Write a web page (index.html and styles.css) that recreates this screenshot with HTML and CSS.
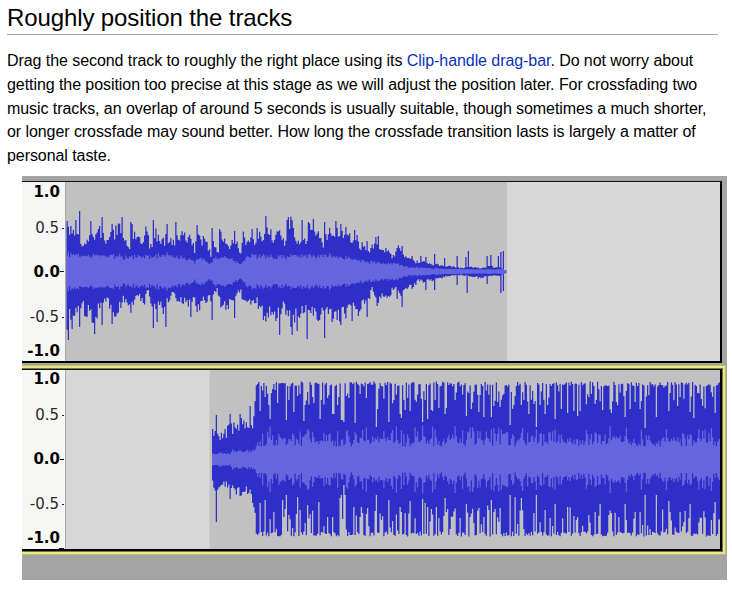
FILE: index.html
```html
<!DOCTYPE html>
<html lang="en">
<head>
<meta charset="utf-8">
<title>Roughly position the tracks</title>
<link rel="stylesheet" href="styles.css">
</head>
<body>
<main>
<h2>Roughly position the tracks</h2>
<p>Drag the second track to roughly the right place using its <a href="#">Clip-handle drag-bar</a>. Do not worry about<br>getting the position too precise at this stage as we will adjust the position later. For crossfading two<br>music tracks, an overlap of around 5 seconds is usually suitable, though sometimes a much shorter,<br>or longer crossfade may sound better. How long the crossfade transition lasts is largely a matter of<br>personal taste.</p>
<div class="editor">
  <section class="track first">
    <div class="ruler"><b>1.0</b><span class="half">0.5</span><b class="zero">0.0</b><span class="half">-0.5</span><b>-1.0</b></div>
    <svg class="wave" id="wave1" viewBox="66 182 654 179"><rect class="clip" x="66" y="182" width="441" height="179"/></svg>
  </section>
  <section class="track second">
    <div class="ruler"><b>1.0</b><span class="half">0.5</span><b class="zero">0.0</b><span class="half">-0.5</span><b>-1.0</b></div>
    <svg class="wave" id="wave2" viewBox="66 370 654 179"><rect class="clip" x="209.5" y="370" width="511" height="179"/></svg>
  </section>
</div>
</main>
<script src="wave.js"></script>
</body>
</html>
```
FILE: styles.css
```css
body { margin: 0; background: #fff; color: #000; font-family: "Liberation Sans", Arial, sans-serif; }
main { width: 732px; height: 591px; overflow: hidden; }
h2 { margin: 0 14px 0 7px; height: 34px; border-bottom: 1px solid #aaa; font-size: 24px; font-weight: 400; line-height: 36px; letter-spacing: -0.11px; }
p { margin: 14px 0 0 7px; font-size: 16px; line-height: 23.8px; height: 127px; white-space: nowrap; letter-spacing: -0.068px; }
a { color: #0b32b8; text-decoration: none; }
.editor { box-sizing: border-box; margin-left: 22px; width: 705px; height: 404px; padding-top: 5px; background: #a4a4a4; overflow: hidden; }
.track { display: flex; box-sizing: border-box; width: 700px; border-top: 1px solid #111; border-right: 2px solid #000; border-bottom: 2px solid #000; background: #d7d7d7; }
.first { height: 182px; }
.second { height: 182px; margin-top: 6px; box-shadow: 0 0 0 1px #77763f, 0 0 0 3px #ebe780, 0 0 0 4px #bcb97b; }
.ruler { box-sizing: border-box; width: 44px; height: 179px; display: grid; grid-template-rows: 19px 54px 33px 58px 10px; align-items: center; background: #f6f6f5; border-right: 1px solid #aaa; font: 15px "DejaVu Sans", sans-serif; color: #050505; }
.second .ruler { grid-template-rows: 18px 54px 34px 56px 12px; background: linear-gradient(#111, #111) 37px 100% / 5px 1px no-repeat #f6f6f5; }
.ruler b, .ruler span { display: flex; align-items: center; justify-content: flex-end; line-height: 10px; padding-right: 5px; }
.ruler .half, .ruler .zero { padding-right: 1px; }
.ruler .half { color: #2a2a2a; }
.half::after { content: ""; width: 2px; height: 1px; margin-left: 3px; background: #222; }
.zero::after { content: ""; width: 4px; height: 1px; background: #111; }
.wave { display: block; width: 654px; height: 179px; }
.clip { fill: #c1c1c1; }
.peak { fill: #2e2ec9; }
.rms { fill: #6565dd; }
```
FILE: wave.js
```js
const STEP = 1.25;
const parse = text => text.trim().split(/\s+/).map(pair => pair.split(":").map(Number));

// Repeatable jitter so that every load draws the same waveform.
function generator(seed) {
  return () => {
    seed = (seed * 1664525 + 1013904223) % 4294967296;
    return seed / 4294967296;
  };
}

function level(points, x) {
  let i = 1;
  while (i < points.length - 1 && points[i][0] < x) i++;
  const [x0, y0] = points[i - 1], [x1, y1] = points[i];
  const t = Math.max(0, Math.min(1, (x - x0) / (x1 - x0)));
  return y0 + (y1 - y0) * t;
}

function mark(values, start, pairs) {
  pairs.forEach(([x, y]) => {
    const i = Math.round((x - start) / STEP);
    if (i >= 0 && i < values.length) values[i] = y;
  });
}

function draw(id, name, start, top, bottom) {
  let d = `M${start} ${top[0]}`;
  top.forEach((y, i) => { d += `V${y.toFixed(1)}H${(start + (i + 1) * STEP).toFixed(2)}`; });
  for (let i = bottom.length - 1; i >= 0; i--) d += `V${bottom[i].toFixed(1)}H${(start + i * STEP).toFixed(2)}`;
  const path = document.createElementNS("http://www.w3.org/2000/svg", "path");
  path.setAttribute("d", d + "Z");
  path.setAttribute("class", name);
  document.getElementById(id).append(path);
}

const top1 = parse(`67:232 72:232 77:238 82:248 86:238 90:235 95:238 100:230 105:240 110:235 115:232 120:228 125:237 129:250 131:228 135:238 140:240 145:232 150:246 155:232 160:245 165:238 172:242 178:238 185:235 190:237 194:250 197:236 202:240 207:243 211:258 213:243 217:252 220:236 225:245 230:246 235:238 240:255 243:233 247:245 252:240 255:248 258:232 263:243 267:226 272:240 276:228 280:235 284:243 287:222 291:224 295:243 300:238 305:243 308:230 312:227 317:230 322:245 327:235 330:226 335:232 340:232 345:232 350:240 354:230 359:247 365:245 370:250 374:244 380:248 385:250 390:253 394:258 397:248 402:248 405:257 410:255 415:262 420:261 430:264 440:265 450:266 460:268 470:267 480:268 490:266 500:268 504:270 507:271`);
const bottom1 = parse(`67:325 70:315 74:313 76:318 80:308 82:298 84:315 88:310 92:322 95:320 98:308 103:305 106:300 110:310 114:315 120:305 125:300 130:312 135:300 139:295 143:305 147:292 153:308 158:302 163:312 168:303 173:290 178:305 185:300 190:308 193:300 198:308 204:302 209:300 213:298 217:290 220:305 227:307 233:305 240:290 243:308 250:305 256:302 260:310 265:320 270:314 275:320 280:313 283:300 286:315 292:325 297:315 305:315 308:305 314:318 320:315 325:305 330:315 335:322 340:318 347:312 352:305 358:312 365:300 368:305 371:289 375:300 381:300 385:296 390:295 395:285 400:295 405:287 412:288 418:281 425:282 435:280 445:277 460:275 480:278 490:276 500:276 507:272`);
const peaks1 = parse(`67:221 75:220 79:211 90:221 101:217 112:224 122:217 130:222 132:224 153:220 167:224 175:222 196:225 212:228 219:229 234:231 251:229 257:228 265:216 287:220 301:220 308:222 313:219 324:222 335:221 340:224 367:241 375:237 378:236 402:246 420:256 425:257 434:254 444:258 456:256 465:257 468:251 486:256 490:255 498:256 500:252 503:251`);
const dips1 = parse(`68:340 72:329 79:327 94:334 102:325 112:324 153:328 156:322 165:327 190:317 197:312 212:320 234:318 279:335 292:335 297:331 307:339 324:338 340:325 352:321 367:317 377:306 397:299 402:307 425:290 434:290 456:285 467:293 486:284 500:293 503:291`);
const body1 = parse(`67:16 120:14 170:15 190:12 194:8 200:14 209:7 213:12 225:14 240:7 246:14 280:14 300:15 330:16 350:12 370:9 395:7 410:4 430:3 470:2 503:2 507:0`);

{
  const start = 66.5, mid = 271.5, random = generator(7);
  const top = [], bottom = [], upper = [], lower = [];
  for (let x = start; x < 506; x += STEP) {
    const up = mid - level(top1, x), down = level(bottom1, x) - mid;
    const a = random(), b = random(), c = random();
    top.push(mid - up * (0.8 + a * 0.36));
    bottom.push(mid + down * (0.78 + b * 0.34));
    const r = level(body1, x) * (0.8 + a * 0.25 + c * 0.25);
    upper.push(mid - r);
    lower.push(mid + r);
  }
  mark(top, start, peaks1);
  mark(bottom, start, dips1);
  draw("wave1", "peak", start, top, bottom);
  draw("wave1", "rms", start, upper, lower);
}

const top2 = parse(`212:432 217:437 222:438 227:430 235:428 240:423 247:427 252:425 254:408 256:385 720:385`);
const bottom2 = parse(`212:482 216:488 230:485 237:490 250:490 254:505 256:534 720:534`);
const cuts2 = parse(`259:411 265:397 270:419 274:390 277:403 286:420 288:400 293:412 297:396 303:421 304:405 312:397 319:419 321:400 327:398 332:414 333:414 338:397 341:420 342:420 343:422 348:398 354:423 360:394 366:398 376:427 388:422 393:400 399:414 401:418 404:410 410:411 422:422 424:400 427:419 431:410 438:408 444:414 446:408 455:400 466:416 471:409 478:412 483:417 491:417 499:407 510:425 514:396 521:405 523:400 528:414 533:404 536:427 544:414 547:405 555:419 561:409 567:413 573:411 577:416 580:411 588:397 595:404 602:410 611:413 625:417 629:409 634:402 640:409 645:428 656:417 668:411 680:397 690:412 693:418 701:399 715:413`);
const floor2 = parse(`259:503 265:500 273:512 282:500 286:495 297:497 299:510 307:505 318:502 327:517 332:517 339:498 341:495 343:485 344:495 353:507 359:517 367:508 376:495 388:500 399:507 401:512 404:513 410:501 422:499 424:503 427:507 431:509 438:518 444:498 446:512 460:518 466:504 478:508 483:517 488:510 491:500 499:508 510:495 514:497 521:498 533:513 536:495 544:510 550:518 555:504 567:507 573:516 577:517 588:515 595:512 600:504 611:513 618:517 625:504 634:512 640:512 645:495 656:495 668:501 670:512 679:512 690:504 701:518 713:513 715:502`);
const starts2 = parse(`216:415 230:414 240:414 249:406`);
const ends2 = parse(`216:522 230:499 240:496`);

{
  const start = 212, mid = 459.5, random = generator(23);
  const top = [], bottom = [], upper = [], lower = [];
  for (let x = start; x < 720; x += STEP) {
    const a = random(), b = random(), c = random(), e = random();
    if (x < 255) {
      top.push(level(top2, x) + a * 12 - 6);
      bottom.push(level(bottom2, x) + b * 12 - 6);
      const r = (x < 230 ? 6 : 8.5) * (0.85 + c * 0.35);
      upper.push(mid - r);
      lower.push(mid + r);
    } else {
      top.push(381.5 + a * 5 + (e > 0.72 ? (e - 0.66) * 75 : 0));
      bottom.push(536.5 - b * 5 - (c > 0.7 ? (c - 0.64) * 80 : 0));
      const r = 13 + 9 * c + (e > 0.65 ? 9 * a + 4 : 0);
      upper.push(mid - r);
      lower.push(mid + r);
    }
  }
  mark(top, start, cuts2.concat(starts2));
  mark(bottom, start, floor2.concat(ends2));
  draw("wave2", "peak", start, top, bottom);
  draw("wave2", "rms", start, upper, lower);
}
```
